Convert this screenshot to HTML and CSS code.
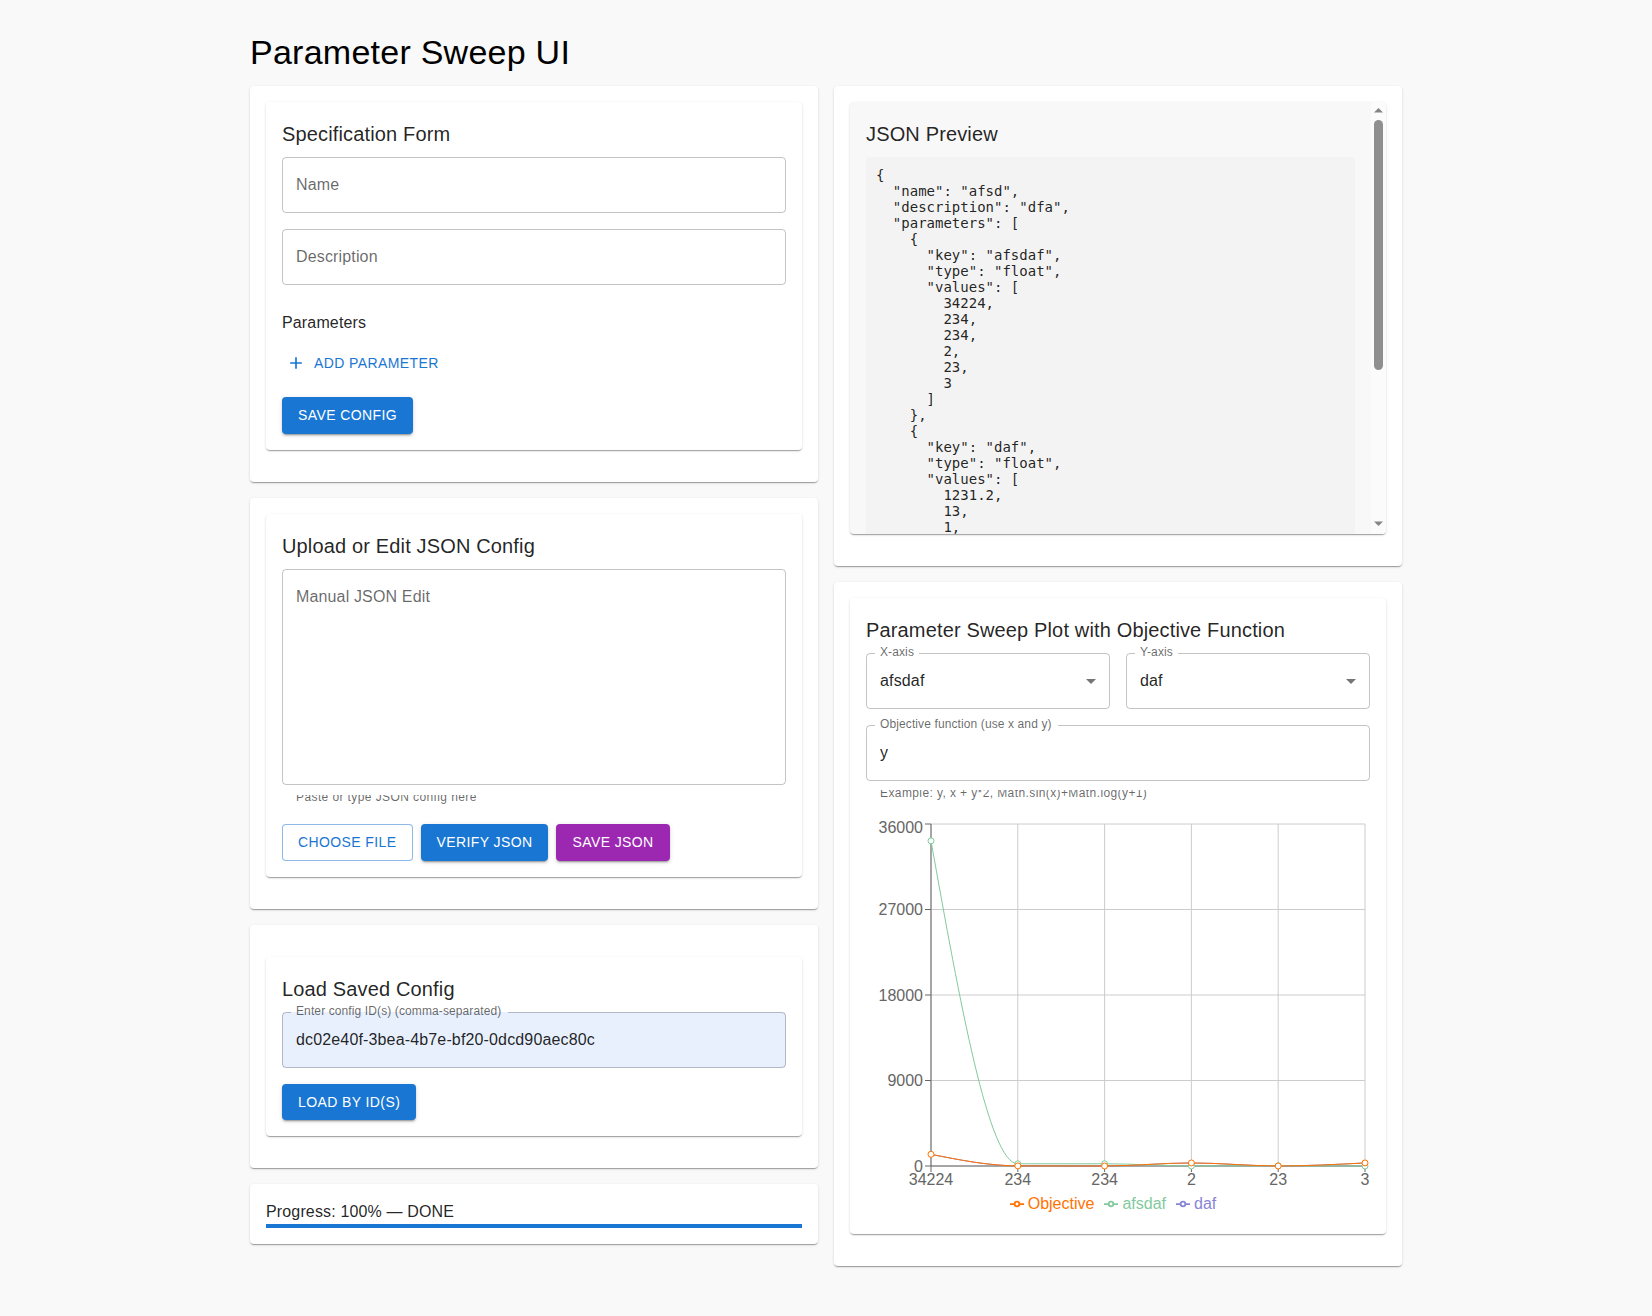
FILE: index.html
```html
<!DOCTYPE html>
<html lang="en">
<head>
<meta charset="utf-8">
<title>Parameter Sweep UI</title>
<link rel="stylesheet" href="styles.css">
</head>
<body>
<div class="container">
  <h1 class="page-title">Parameter Sweep UI</h1>
  <div class="layout">
    <div class="column">
      <section class="paper">
        <div class="card">
          <div class="card-content">
            <h2 class="card-title">Specification Form</h2>
            <div class="field field-empty field-gap"><span class="field-label">Name</span></div>
            <div class="field field-empty field-gap"><span class="field-label">Description</span></div>
            <h3 class="subtitle">Parameters</h3>
            <button class="btn btn-text add-btn" type="button"><svg class="btn-icon" viewBox="0 0 24 24" width="20" height="20"><path d="M19 13h-6v6h-2v-6H5v-2h6V5h2v6h6z"/></svg>ADD PARAMETER</button>
            <div class="actions">
              <button class="btn btn-contained btn-primary" type="button">SAVE CONFIG</button>
            </div>
          </div>
        </div>
      </section>

      <section class="paper">
        <div class="card">
          <div class="card-content">
            <h2 class="card-title">Upload or Edit JSON Config</h2>
            <div class="field field-empty field-multiline"><span class="field-label">Manual JSON Edit</span></div>
            <div class="helper"><span>Paste or type JSON config here</span></div>
            <div class="actions">
              <button class="btn btn-outlined" type="button">CHOOSE FILE</button>
              <button class="btn btn-contained btn-primary" type="button">VERIFY JSON</button>
              <button class="btn btn-contained btn-secondary" type="button">SAVE JSON</button>
            </div>
          </div>
        </div>
      </section>

      <section class="paper">
        <div class="spacer"></div>
        <div class="card">
          <div class="card-content">
            <h2 class="card-title">Load Saved Config</h2>
            <div class="field field-autofill">
              <span class="field-value">dc02e40f-3bea-4b7e-bf20-0dcd90aec80c</span>
              <fieldset class="outline"><legend><span>Enter config ID(s) (comma-separated)</span></legend></fieldset>
              <label class="float-label">Enter config ID(s) (comma-separated)</label>
            </div>
            <div class="actions">
              <button class="btn btn-contained btn-primary" type="button">LOAD BY ID(S)</button>
            </div>
          </div>
        </div>
      </section>

      <section class="paper">
        <div class="progress-text">Progress: 100% — DONE</div>
        <div class="progress-track"><div class="progress-bar" style="width: 100%"></div></div>
      </section>
    </div>

    <div class="column">
      <section class="paper">
        <div class="card json-card">
          <div class="json-scroll">
            <div class="card-content">
              <h2 class="card-title">JSON Preview</h2>
<pre class="json-pre">{
  "name": "afsd",
  "description": "dfa",
  "parameters": [
    {
      "key": "afsdaf",
      "type": "float",
      "values": [
        34224,
        234,
        234,
        2,
        23,
        3
      ]
    },
    {
      "key": "daf",
      "type": "float",
      "values": [
        1231.2,
        13,
        1,
        321,
        3,
        321
      ]
    }
  ],
  "objective": "y",
  "x_axis": "afsdaf",
  "y_axis": "daf",
  "id": "dc02e40f-3bea-4b7e-bf20-0dcd90aec80c",
  "status": "DONE",
  "progress": 100
}</pre>
            </div>
          </div>
          <div class="scrollbar" aria-hidden="true">
            <svg class="sb-button" width="15" height="15" viewBox="0 0 15 15"><polygon points="3,10.5 12,10.5 7.5,6"/></svg>
            <div class="sb-track"><div class="sb-thumb"></div></div>
            <svg class="sb-button" width="15" height="15" viewBox="0 0 15 15"><polygon points="3,2.5 12,2.5 7.5,7"/></svg>
          </div>
        </div>
      </section>

      <section class="paper">
        <div class="card">
          <div class="card-content">
            <h2 class="card-title">Parameter Sweep Plot with Objective Function</h2>
            <div class="select-row">
              <div class="field">
                <span class="field-value">afsdaf</span>
                <svg class="select-icon" viewBox="0 0 24 24" width="24" height="24"><path d="M7 10l5 5 5-5z"/></svg>
                <fieldset class="outline"><legend><span>X-axis</span></legend></fieldset>
                <label class="float-label">X-axis</label>
              </div>
              <div class="field">
                <span class="field-value">daf</span>
                <svg class="select-icon" viewBox="0 0 24 24" width="24" height="24"><path d="M7 10l5 5 5-5z"/></svg>
                <fieldset class="outline"><legend><span>Y-axis</span></legend></fieldset>
                <label class="float-label">Y-axis</label>
              </div>
            </div>
            <div class="field">
              <span class="field-value">y</span>
              <fieldset class="outline"><legend><span>Objective function (use x and y)</span></legend></fieldset>
              <label class="float-label">Objective function (use x and y)</label>
            </div>
            <div class="helper"><span>Example: y, x + y*2, Math.sin(x)+Math.log(y+1)</span></div>

            <div class="chart">
              <svg class="chart-svg" width="504" height="374" viewBox="0 0 504 374">
                <g class="grid-lines" stroke="#ccc" fill="none">
                  <line x1="65" y1="6" x2="499" y2="6"/>
                  <line x1="65" y1="91.5" x2="499" y2="91.5"/>
                  <line x1="65" y1="177" x2="499" y2="177"/>
                  <line x1="65" y1="262.5" x2="499" y2="262.5"/>
                  <line x1="65" y1="348" x2="499" y2="348"/>
                  <line x1="65" y1="6" x2="65" y2="348"/>
                  <line x1="151.8" y1="6" x2="151.8" y2="348"/>
                  <line x1="238.6" y1="6" x2="238.6" y2="348"/>
                  <line x1="325.4" y1="6" x2="325.4" y2="348"/>
                  <line x1="412.2" y1="6" x2="412.2" y2="348"/>
                  <line x1="499" y1="6" x2="499" y2="348"/>
                </g>
                <g class="axis" stroke="#666" fill="none">
                  <line x1="65" y1="348" x2="499" y2="348"/>
                  <line x1="65" y1="6" x2="65" y2="348"/>
                  <line x1="59" y1="6" x2="65" y2="6"/>
                  <line x1="59" y1="91.5" x2="65" y2="91.5"/>
                  <line x1="59" y1="177" x2="65" y2="177"/>
                  <line x1="59" y1="262.5" x2="65" y2="262.5"/>
                  <line x1="59" y1="348" x2="65" y2="348"/>
                  <line x1="65" y1="348" x2="65" y2="354"/>
                  <line x1="151.8" y1="348" x2="151.8" y2="354"/>
                  <line x1="238.6" y1="348" x2="238.6" y2="354"/>
                  <line x1="325.4" y1="348" x2="325.4" y2="354"/>
                  <line x1="412.2" y1="348" x2="412.2" y2="354"/>
                  <line x1="499" y1="348" x2="499" y2="354"/>
                </g>
                <g class="tick-labels" fill="#666" text-anchor="end">
                  <text x="57" y="14.7">36000</text>
                  <text x="57" y="97.2">27000</text>
                  <text x="57" y="182.7">18000</text>
                  <text x="57" y="268.2">9000</text>
                  <text x="57" y="353.7">0</text>
                </g>
                <g class="tick-labels" fill="#666" text-anchor="middle">
                  <text x="65" y="367.4">34224</text>
                  <text x="151.8" y="367.4">234</text>
                  <text x="238.6" y="367.4">234</text>
                  <text x="325.4" y="367.4">2</text>
                  <text x="412.2" y="367.4">23</text>
                  <text x="499" y="367.4">3</text>
                </g>
                <g class="series" fill="none">
                  <path stroke="#8884d8" d="M65,336.3 C93.93,342.05 122.87,347.81 151.8,347.88 C180.73,347.95 209.67,347.99 238.6,347.99 C267.53,347.99 296.47,344.95 325.4,344.95 C354.33,344.95 383.27,347.97 412.2,347.97 C441.13,347.97 470.07,346.46 499,344.95"/>
                  <path stroke="#82ca9d" d="M65,22.87 C93.93,184.33 122.87,345.78 151.8,345.78 C180.73,345.78 209.67,345.78 238.6,345.78 C267.53,345.78 296.47,347.98 325.4,347.98 C354.33,347.98 383.27,347.78 412.2,347.78 C441.13,347.78 470.07,347.87 499,347.97"/>
                  <path stroke="#ff7300" d="M65,336.3 C93.93,342.05 122.87,347.81 151.8,347.88 C180.73,347.95 209.67,347.99 238.6,347.99 C267.53,347.99 296.47,344.95 325.4,344.95 C354.33,344.95 383.27,347.97 412.2,347.97 C441.13,347.97 470.07,346.46 499,344.95"/>
                </g>
                <g class="dots" fill="#fff" stroke="#82ca9d">
                  <circle cx="65" cy="22.87" r="3"/>
                  <circle cx="151.8" cy="345.78" r="3"/>
                  <circle cx="238.6" cy="345.78" r="3"/>
                  <circle cx="325.4" cy="347.98" r="3"/>
                  <circle cx="412.2" cy="347.78" r="3"/>
                  <circle cx="499" cy="347.97" r="3"/>
                </g>
                <g class="dots" fill="#fff" stroke="#ff7300">
                  <circle cx="65" cy="336.3" r="3"/>
                  <circle cx="151.8" cy="347.88" r="3"/>
                  <circle cx="238.6" cy="347.99" r="3"/>
                  <circle cx="325.4" cy="344.95" r="3"/>
                  <circle cx="412.2" cy="347.97" r="3"/>
                  <circle cx="499" cy="344.95" r="3"/>
                </g>
              </svg>
              <ul class="legend">
                <li class="legend-item legend-objective"><svg class="legend-icon" width="14" height="14" viewBox="0 0 32 32"><path stroke="#ff7300" stroke-width="4" fill="none" d="M0,16h10.666666666666666 A5.333333333333333,5.333333333333333,0,1,1,21.333333333333332,16 H32M21.333333333333332,16 A5.333333333333333,5.333333333333333,0,1,1,10.666666666666666,16"/></svg><span>Objective</span></li><li class="legend-item legend-x"><svg class="legend-icon" width="14" height="14" viewBox="0 0 32 32"><path stroke="#82ca9d" stroke-width="4" fill="none" d="M0,16h10.666666666666666 A5.333333333333333,5.333333333333333,0,1,1,21.333333333333332,16 H32M21.333333333333332,16 A5.333333333333333,5.333333333333333,0,1,1,10.666666666666666,16"/></svg><span>afsdaf</span></li><li class="legend-item legend-y"><svg class="legend-icon" width="14" height="14" viewBox="0 0 32 32"><path stroke="#8884d8" stroke-width="4" fill="none" d="M0,16h10.666666666666666 A5.333333333333333,5.333333333333333,0,1,1,21.333333333333332,16 H32M21.333333333333332,16 A5.333333333333333,5.333333333333333,0,1,1,10.666666666666666,16"/></svg><span>daf</span></li>
              </ul>
            </div>
          </div>
        </div>
      </section>
    </div>
  </div>
</div>
</body>
</html>
```

FILE: styles.css
```css
* {
  box-sizing: border-box;
}

html,
body {
  margin: 0;
}

body {
  background: #f9f9f9;
  font-family: "Liberation Sans", Arial, Helvetica, sans-serif;
  color: rgba(0, 0, 0, 0.87);
  font-size: 16px;
  line-height: 1.5;
  letter-spacing: 0.15px;
}

.container {
  width: 1200px;
  margin: 0 auto;
  padding: 32px 24px;
}

.page-title {
  margin: 0 0 11.9px;
  font-size: 34px;
  font-weight: 400;
  line-height: 1.235;
  letter-spacing: 0.25px;
  color: #000;
}

.layout {
  display: grid;
  grid-template-columns: 1fr 1fr;
  column-gap: 16px;
  align-items: start;
}

.paper,
.card {
  background: #fff;
  border-radius: 4px;
  box-shadow: 0 2px 1px -1px rgba(0, 0, 0, 0.2), 0 1px 1px 0 rgba(0, 0, 0, 0.14), 0 1px 3px 0 rgba(0, 0, 0, 0.12);
}

.paper {
  padding: 16px;
  margin-bottom: 16px;
}

.card {
  margin-bottom: 16px;
}

.spacer {
  height: 16px;
}

.card-content {
  padding: 16px;
}

.card-title {
  margin: 0 0 7px;
  font-size: 20px;
  font-weight: 400;
  line-height: 1.6;
  letter-spacing: 0.15px;
}

/* Text fields */
.field {
  position: relative;
  display: flex;
  align-items: center;
  height: 56px;
  padding: 0 7px 0 14px;
  border-radius: 4px;
  font-size: 16px;
  line-height: 23px;
  letter-spacing: 0.15px;
}

.field-empty {
  border: 1px solid rgba(0, 0, 0, 0.23);
  padding: 0 13px;
}

.field-gap {
  margin-bottom: 16px;
}

.field-multiline {
  height: 216.5px;
  align-items: flex-start;
  padding-top: 15px;
}

.field-label {
  color: rgba(0, 0, 0, 0.6);
}

.field-value {
  flex: 1;
  color: rgba(0, 0, 0, 0.87);
  white-space: nowrap;
}

.field-autofill {
  background: #e8f0fe;
}

.outline {
  position: absolute;
  top: -5px;
  right: 0;
  bottom: 0;
  left: 0;
  margin: 0;
  padding: 0 8px;
  border: 1px solid rgba(0, 0, 0, 0.23);
  border-radius: 4px;
  pointer-events: none;
  min-width: 0;
  overflow: hidden;
  text-align: left;
}

.outline legend {
  float: unset;
  width: auto;
  display: block;
  overflow: hidden;
  padding: 0;
  height: 11px;
  font-size: 12px;
  visibility: hidden;
  max-width: 100%;
  white-space: nowrap;
}

.outline legend span {
  display: inline-block;
  padding: 0 5px;
  opacity: 0;
}

.float-label {
  position: absolute;
  left: 14px;
  top: -9px;
  font-size: 12px;
  line-height: 17.25px;
  letter-spacing: 0.11px;
  color: rgba(0, 0, 0, 0.6);
  white-space: nowrap;
}

.select-icon {
  flex: none;
  fill: rgba(0, 0, 0, 0.54);
}

.select-row {
  display: grid;
  grid-template-columns: 1fr 1fr;
  gap: 16px;
  margin-bottom: 16px;
}

.helper {
  margin: 9.4px 14px 0;
  height: 13.5px;
  overflow: hidden;
  font-size: 12px;
  line-height: 1.66;
  letter-spacing: 0.4px;
  color: rgba(0, 0, 0, 0.6);
}

.helper span {
  display: block;
  margin-top: -6.4px;
  white-space: nowrap;
}

.subtitle {
  margin: 24px 0 0;
  font-size: 16px;
  font-weight: 400;
  line-height: 1.75;
  letter-spacing: 0.15px;
}

/* Buttons */
.btn {
  display: inline-flex;
  align-items: center;
  justify-content: center;
  min-width: 64px;
  margin: 0;
  padding: 6px 16px;
  border: 0;
  border-radius: 4px;
  background: transparent;
  font-family: inherit;
  font-size: 14px;
  font-weight: 400;
  line-height: 24.5px;
  letter-spacing: 0.4px;
  text-transform: uppercase;
  cursor: pointer;
}

.btn-contained {
  color: #fff;
  box-shadow: 0 3px 1px -2px rgba(0, 0, 0, 0.2), 0 2px 2px 0 rgba(0, 0, 0, 0.14), 0 1px 5px 0 rgba(0, 0, 0, 0.12);
}

.btn-primary {
  background: #1976d2;
}

.btn-secondary {
  background: #9c27b0;
}

.btn-outlined {
  padding: 5px 15px;
  border: 1px solid rgba(25, 118, 210, 0.5);
  color: #1976d2;
  background: #fff;
}

.btn-text {
  padding: 6px 8px;
  color: #1976d2;
}

.btn-icon {
  fill: currentColor;
  margin-left: -4px;
  margin-right: 8px;
}

.add-btn {
  margin-top: 8px;
}

.actions {
  display: flex;
  gap: 8px;
  margin-top: 16px;
}

/* Progress */
.progress-text {
  line-height: 24px;
}

.progress-track {
  height: 4px;
  background: rgb(167, 202, 237);
  overflow: hidden;
}

.progress-bar {
  height: 100%;
  background: #1976d2;
}

/* JSON preview */
.json-card {
  display: flex;
  height: 432px;
  overflow: hidden;
  background: #f8f8f8;
}

.json-scroll {
  flex: 1;
  min-width: 0;
  overflow: hidden;
}

.scrollbar {
  flex: none;
  width: 15px;
  display: flex;
  flex-direction: column;
  background: #fbfbfb;
}

.sb-button {
  display: block;
  flex: none;
  fill: #858585;
}

.sb-track {
  flex: 1;
  padding: 3px 3px 0;
}

.sb-thumb {
  width: 9px;
  height: 250px;
  border-radius: 4.5px;
  background: #8f8f8f;
}

.json-pre {
  margin: 0 0 16px;
  padding: 10px;
  background: #f3f3f3;
  border-radius: 4px;
  font-family: "DejaVu Sans Mono", monospace;
  font-size: 14px;
  line-height: normal;
  letter-spacing: 0;
  color: rgba(0, 0, 0, 0.87);
  white-space: pre;
  overflow: hidden;
}

/* Chart */
.chart {
  margin-top: 13.8px;
  height: 400px;
}

.chart-svg {
  display: block;
  overflow: visible;
}

.tick-labels {
  font-size: 16px;
  letter-spacing: 0;
}

.legend {
  margin: 0;
  padding: 0;
  list-style: none;
  text-align: center;
  line-height: 24px;
  letter-spacing: 0;
}

.legend-item {
  display: inline-block;
  margin-right: 10px;
}

.legend-icon {
  display: inline-block;
  vertical-align: middle;
  margin-right: 4px;
}

.legend-objective {
  color: #ff7300;
}

.legend-x {
  color: #82ca9d;
}

.legend-y {
  color: #8884d8;
}
```
